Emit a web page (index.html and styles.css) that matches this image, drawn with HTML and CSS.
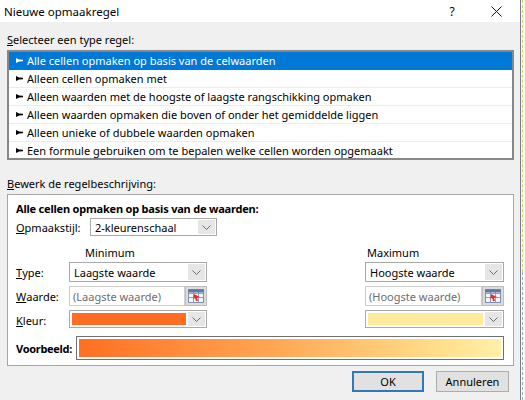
FILE: index.html
```html
<!DOCTYPE html>
<html lang="nl">
<head>
<meta charset="utf-8">
<title>Nieuwe opmaakregel</title>
<link rel="stylesheet" href="styles.css">
</head>
<body>
<div class="screen">
  <div class="dialog">
    <div class="titlebar">
      <span class="title">Nieuwe opmaakregel</span>
      <span class="help">?</span>
      <span class="close"><svg width="11" height="11" viewBox="0 0 11 11"><path d="M0.5 0.5 L10.5 10.5 M10.5 0.5 L0.5 10.5" stroke="#111" stroke-width="1" fill="none"/></svg></span>
    </div>
    <div class="content">
      <div class="label l1"><u>S</u>electeer een type regel:</div>
      <ul class="list">
        <li class="item selected"><span class="arrow"></span>Alle cellen opmaken op basis van de celwaarden</li>
        <li class="item"><span class="arrow"></span>Alleen cellen opmaken met</li>
        <li class="item"><span class="arrow"></span>Alleen waarden met de hoogste of laagste rangschikking opmaken</li>
        <li class="item"><span class="arrow"></span>Alleen waarden opmaken die boven of onder het gemiddelde liggen</li>
        <li class="item"><span class="arrow"></span>Alleen unieke of dubbele waarden opmaken</li>
        <li class="item"><span class="arrow"></span>Een formule gebruiken om te bepalen welke cellen worden opgemaakt</li>
      </ul>
      <div class="label l2"><u>B</u>ewerk de regelbeschrijving:</div>
      <div class="panel">
        <div class="heading">Alle cellen opmaken op basis van de waarden:</div>
        <div class="style-row">
          <span class="style-label"><u>O</u>pmaakstijl:</span>
          <div class="combo style-combo"><span class="combo-text">2-kleurenschaal</span><span class="drop"><svg width="9" height="5" viewBox="0 0 9 5"><path d="M0.5 0.5 L4.5 4.5 L8.5 0.5" stroke="#6b6b6b" fill="none"/></svg></span></div>
        </div>
        <div class="grid">
          <span></span>
          <span class="colhead min-head">Minimum</span>
          <span></span>
          <span class="colhead max-head">Maximum</span>

          <span class="rowlbl"><u>T</u>ype:</span>
          <div class="combo"><span class="combo-text">Laagste waarde</span><span class="drop"><svg width="9" height="5" viewBox="0 0 9 5"><path d="M0.5 0.5 L4.5 4.5 L8.5 0.5" stroke="#6b6b6b" fill="none"/></svg></span></div>
          <span></span>
          <div class="combo"><span class="combo-text">Hoogste waarde</span><span class="drop"><svg width="9" height="5" viewBox="0 0 9 5"><path d="M0.5 0.5 L4.5 4.5 L8.5 0.5" stroke="#6b6b6b" fill="none"/></svg></span></div>

          <span class="rowlbl"><u>W</u>aarde:</span>
          <div class="valuebox"><span class="field">(Laagste waarde)</span><span class="refbtn"><svg width="16" height="14" viewBox="0 0 16 14"><rect x="0.5" y="0.5" width="15" height="13" fill="#f4f6fa" stroke="#7d8fb0"/><path d="M0.5 4.5 H15.5 M0.5 8.5 H15.5 M5.5 0.5 V13.5 M10.5 0.5 V13.5" stroke="#8ea0c0"/><rect x="0.5" y="0.5" width="15" height="3" fill="#5d77a8"/><path d="M6 5 L12 8 L9 9 L10 12 L8 12 L7 9 L5 10 Z" fill="#e0322b"/></svg></span></div>
          <span></span>
          <div class="valuebox"><span class="field">(Hoogste waarde)</span><span class="refbtn"><svg width="16" height="14" viewBox="0 0 16 14"><rect x="0.5" y="0.5" width="15" height="13" fill="#f4f6fa" stroke="#7d8fb0"/><path d="M0.5 4.5 H15.5 M0.5 8.5 H15.5 M5.5 0.5 V13.5 M10.5 0.5 V13.5" stroke="#8ea0c0"/><rect x="0.5" y="0.5" width="15" height="3" fill="#5d77a8"/><path d="M6 5 L12 8 L9 9 L10 12 L8 12 L7 9 L5 10 Z" fill="#e0322b"/></svg></span></div>

          <span class="rowlbl"><u>K</u>leur:</span>
          <div class="combo colorcombo"><span class="swatch min"></span><span class="drop"><svg width="9" height="5" viewBox="0 0 9 5"><path d="M0.5 0.5 L4.5 4.5 L8.5 0.5" stroke="#6b6b6b" fill="none"/></svg></span></div>
          <span></span>
          <div class="combo colorcombo"><span class="swatch max"></span><span class="drop"><svg width="9" height="5" viewBox="0 0 9 5"><path d="M0.5 0.5 L4.5 4.5 L8.5 0.5" stroke="#6b6b6b" fill="none"/></svg></span></div>
        </div>
        <div class="preview-row">
          <span class="preview-label">Voorbeeld:</span>
          <div class="preview"><div class="gradient"></div></div>
        </div>
      </div>
      <div class="buttons">
        <button class="btn ok">OK</button>
        <button class="btn">Annuleren</button>
      </div>
    </div>
  </div>
  <div class="edge"><div class="edge-yellow"></div><div class="edge-gray"></div></div>
</div>
</body>
</html>
```

FILE: styles.css
```css
html, body {
  margin: 0;
  padding: 0;
}
body {
  width: 525px;
  height: 400px;
  overflow: hidden;
  background: #f0f0f0;
  font-family: "Noto Sans", "Open Sans", sans-serif;
  font-size: 11px;
  color: #000;
}
.screen {
  display: flex;
  width: 525px;
  height: 400px;
}
.dialog {
  width: 520px;
  height: 400px;
  border-right: 1px solid #6f7f90;
  background: #f0f0f0;
  display: flex;
  flex-direction: column;
}
.titlebar {
  height: 22px;
  background: #fff;
  display: flex;
  align-items: center;
  padding-left: 4px;
  flex: none;
}
.title {
  font-size: 11.5px;
  flex: 1;
}
.help {
  width: 10px;
  text-align: center;
  font-size: 12px;
  margin-right: 34px;
}
.close {
  width: 11px;
  height: 11px;
  display: flex;
  margin-right: 18px;
}
.content {
  padding: 0 6px 0 7px;
  display: flex;
  flex-direction: column;
}
.label {
  line-height: 16px;
  height: 16px;
}
.l1 { margin-top: 10px; }
.l2 { margin-top: 16px; }
.list {
  list-style: none;
  margin: 2px 0 0 0;
  padding: 0;
  background: #fff;
  border: 2px solid #878787;
  height: 106px;
}
.item {
  height: 17px;
  line-height: 17px;
  border-bottom: 1px solid #ececec;
  display: flex;
  align-items: center;
  padding-left: 7px;
  white-space: nowrap;
}
.item:last-child { border-bottom: none; }
.item.selected {
  background: #0078d7;
  color: #fff;
  border-bottom-color: #0078d7;
}
.arrow {
  width: 7px;
  height: 5px;
  margin-right: 4px;
  background: currentColor;
  clip-path: polygon(0 0, 45% 30%, 100% 35%, 100% 65%, 45% 70%, 0 100%);
}
.panel {
  margin-top: 2px;
  background: #fff;
  border: 1px solid #a6a6a6;
  padding: 6px 9px 5px 8px;
  display: flex;
  flex-direction: column;
}
.heading {
  font-weight: bold;
  line-height: 16px;
  letter-spacing: -0.2px;
}
.style-row {
  margin-top: 1px;
  display: flex;
  align-items: center;
  height: 18px;
}
.style-label {
  width: 74px;
}
.combo {
  height: 20px;
  box-sizing: border-box;
  border: 1px solid #a9a9a9;
  background: #fff;
  display: flex;
  align-items: stretch;
}
.style-combo {
  width: 127px;
  height: 18px;
}
.combo-text {
  flex: 1;
  padding-left: 4px;
  display: flex;
  align-items: center;
  white-space: nowrap;
}
.drop {
  width: 17px;
  margin: 1px;
  background: #e6e6e6;
  display: flex;
  align-items: center;
  justify-content: center;
}
.grid {
  margin-top: 6px;
  display: grid;
  grid-template-columns: 53px 138px 1fr 139px;
  grid-template-rows: 20px 24px 24px 18px;
}
.colhead {
  align-self: end;
  line-height: 16px;
  padding-bottom: 1px;
}
.min-head { padding-left: 16px; }
.max-head { padding-left: 2px; }
.rowlbl {
  height: 20px;
  display: flex;
  align-items: center;
}
.grid > .combo, .grid > .valuebox { align-self: start; }
.valuebox {
  height: 20px;
  display: flex;
}
.field {
  flex: 1;
  box-sizing: border-box;
  border: 1px solid #cfcfcf;
  color: #6d6d6d;
  padding-left: 3px;
  display: flex;
  align-items: center;
  white-space: nowrap;
}
.refbtn {
  width: 22px;
  box-sizing: border-box;
  border: 1px solid #bdbdbd;
  background: #dcdcdc;
  display: flex;
  align-items: center;
  justify-content: center;
}
.colorcombo {
  height: 18px;
}
.swatch {
  flex: 1;
  margin: 2px 1px 2px 2px;
}
.swatch.min { background: #ff6d22; }
.swatch.max { background: #ffeb9c; }
.preview-row {
  margin-top: 8px;
  display: flex;
  align-items: center;
  height: 24px;
}
.preview-label {
  width: 60px;
  font-weight: bold;
  letter-spacing: -0.3px;
}
.preview {
  flex: 1;
  height: 24px;
  box-sizing: border-box;
  border: 1px solid #707070;
  padding: 2px;
  background: #fff;
}
.gradient {
  height: 100%;
  background: linear-gradient(to right, #ff6f22, #ffa552 45%, #ffde8a 85%, #fff0a8);
}
.buttons {
  margin-top: 5px;
  display: flex;
  justify-content: flex-end;
  gap: 12px;
  padding-right: 5px;
}
.btn {
  width: 73px;
  height: 21px;
  box-sizing: border-box;
  border: 1px solid #adadad;
  background: #e1e1e1;
  font-family: inherit;
  font-size: 11px;
  color: #000;
  padding: 0;
}
.btn.ok {
  width: 72px;
  border: 2px solid #3178b5;
}
.edge {
  flex: 1;
  background: #f7f7f7;
  display: flex;
  flex-direction: column;
  padding-left: 1px;
}
.edge-yellow {
  height: 272px;
  border-left: 1px dashed #e3d24a;
}
.edge-gray {
  flex: 1;
  border-left: 1px dashed #a8a8a8;
}
```
